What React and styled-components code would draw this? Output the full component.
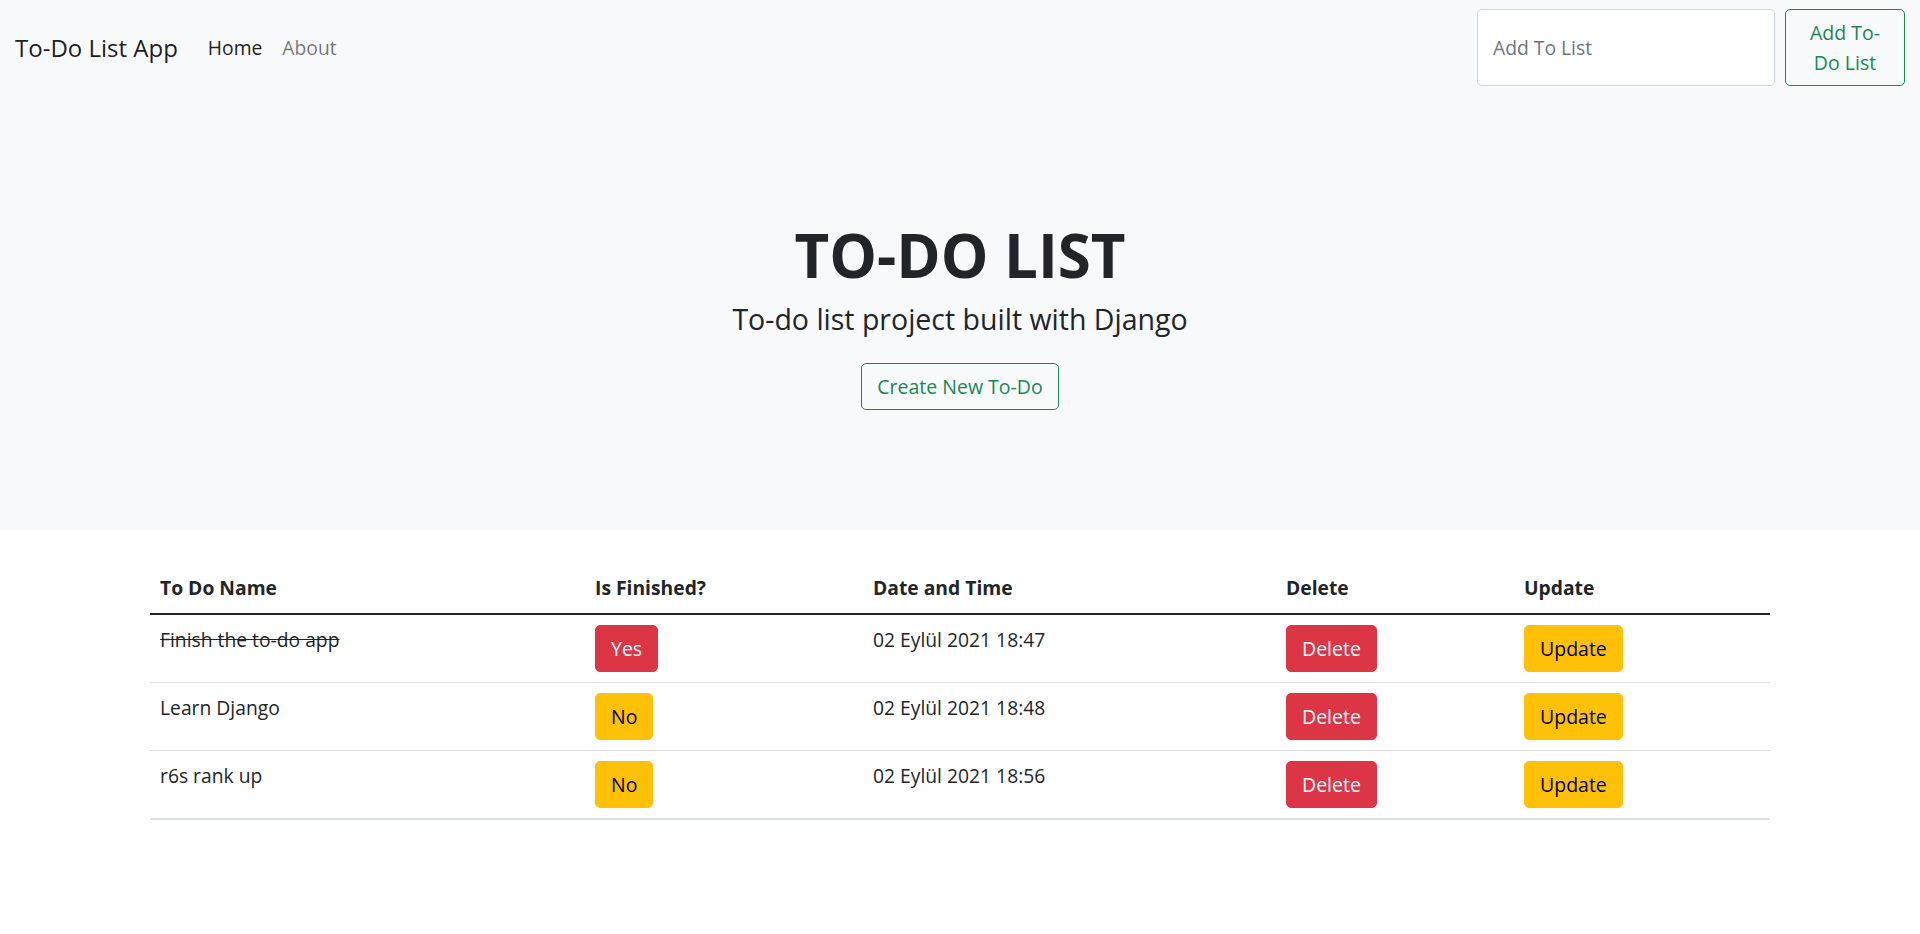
import React from "react";
import styled, { createGlobalStyle, css } from "styled-components";

const GlobalStyle = createGlobalStyle`
  html, body { margin: 0; padding: 0; background: #fff; }
  body {
    font-family: "Segoe UI", "Open Sans", "Noto Sans", sans-serif;
    color: #212529;
    font-size: 19.4px;
    line-height: 30px;
  }
  * { box-sizing: border-box; }
`;

const TopArea = styled.div`
  background: #f8f9fa;
`;

const Navbar = styled.nav`
  display: flex;
  align-items: center;
  justify-content: space-between;
  padding: 9px 15px;
`;

const NavLeft = styled.div`
  display: flex;
  align-items: center;
`;

const Brand = styled.a`
  font-size: 24px;
  line-height: 37.5px;
  color: rgba(0, 0, 0, 0.9);
  text-decoration: none;
  margin-right: 20px;
`;

const NavLink = styled.a`
  padding: 10px;
  font-size: 19.3px;
  line-height: 30px;
  text-decoration: none;
  color: ${(p) => (p.$active ? "rgba(0,0,0,0.9)" : "rgba(0,0,0,0.55)")};
`;

const SearchForm = styled.form`
  display: flex;
  align-items: stretch;
  gap: 10px;
`;

const Input = styled.input`
  width: 298px;
  padding: 7.5px 15px;
  font-family: inherit;
  font-size: 19.3px;
  line-height: 30px;
  color: #212529;
  background: #fff;
  border: 1px solid #ced4da;
  border-radius: 5px;
  outline: none;
  &::placeholder { color: #6c757d; }
`;

const variants = {
  outline: css`
    color: #198754;
    background: transparent;
    border-color: #198754;
  `,
  danger: css`
    color: #fff;
    background: #dc3545;
    border-color: #dc3545;
  `,
  warning: css`
    color: #000;
    background: #ffc107;
    border-color: #ffc107;
  `,
};

const Button = styled.button`
  display: inline-block;
  font-family: inherit;
  font-size: 19.5px;
  line-height: 30px;
  font-weight: 400;
  padding: 7.5px 15px;
  border: 1px solid transparent;
  border-radius: 5px;
  text-align: center;
  cursor: pointer;
  ${(p) => variants[p.$variant]}
`;

const AddButton = styled(Button)`
  width: 120px;
`;

const Hero = styled.header`
  text-align: center;
  padding: 124px 24px 120px;
`;

const Title = styled.h1`
  margin: 0 0 9px;
  font-size: 60px;
  font-weight: 700;
  line-height: 72px;
`;

const Lead = styled.p`
  margin: 0 0 25px;
  font-size: 28.5px;
  font-weight: 400;
  line-height: 38px;
`;

const Container = styled.main`
  width: 1650px;
  margin: 33px auto 0;
  padding: 0 15px;
`;

const Table = styled.table`
  width: 100%;
  border-collapse: collapse;
  vertical-align: top;
  color: #212529;
  border-bottom: 2px solid #dee2e6;
`;

const Th = styled.th`
  text-align: left;
  font-weight: 700;
  font-size: 19.3px;
  line-height: 30px;
  padding: 10px;
  width: ${(p) => p.$w}px;
`;

const HeadRow = styled.tr`
  border-bottom: 2px solid #212529;
`;

const Row = styled.tr`
  border-bottom: 1px solid #dee2e6;
`;

const Td = styled.td`
  padding: 10px;
  font-size: 19.3px;
  line-height: 30px;
  vertical-align: top;
  text-decoration: ${(p) => (p.$done ? "line-through" : "none")};
`;

const todos = [
  { name: "Finish the to-do app", done: true, date: "02 Eylül 2021 18:47" },
  { name: "Learn Django", done: false, date: "02 Eylül 2021 18:48" },
  { name: "r6s rank up", done: false, date: "02 Eylül 2021 18:56" },
];

export default function App() {
  return (
    <>
      <GlobalStyle />
      <TopArea>
        <Navbar>
          <NavLeft>
            <Brand href="#">To-Do List App</Brand>
            <NavLink href="#" $active>Home</NavLink>
            <NavLink href="#">About</NavLink>
          </NavLeft>
          <SearchForm onSubmit={(e) => e.preventDefault()}>
            <Input placeholder="Add To List" />
            <AddButton $variant="outline" type="submit">Add To-Do List</AddButton>
          </SearchForm>
        </Navbar>
        <Hero>
          <Title>TO-DO LIST</Title>
          <Lead>To-do list project built with Django</Lead>
          <Button $variant="outline">Create New To-Do</Button>
        </Hero>
      </TopArea>
      <Container>
        <Table>
          <thead>
            <HeadRow>
              <Th $w={435}>To Do Name</Th>
              <Th $w={278}>Is Finished?</Th>
              <Th $w={413}>Date and Time</Th>
              <Th $w={238}>Delete</Th>
              <Th $w={256}>Update</Th>
            </HeadRow>
          </thead>
          <tbody>
            {todos.map((t) => (
              <Row key={t.name}>
                <Td $done={t.done}>{t.name}</Td>
                <Td>
                  <Button $variant={t.done ? "danger" : "warning"}>
                    {t.done ? "Yes" : "No"}
                  </Button>
                </Td>
                <Td>{t.date}</Td>
                <Td>
                  <Button $variant="danger">Delete</Button>
                </Td>
                <Td>
                  <Button $variant="warning">Update</Button>
                </Td>
              </Row>
            ))}
          </tbody>
        </Table>
      </Container>
    </>
  );
}
